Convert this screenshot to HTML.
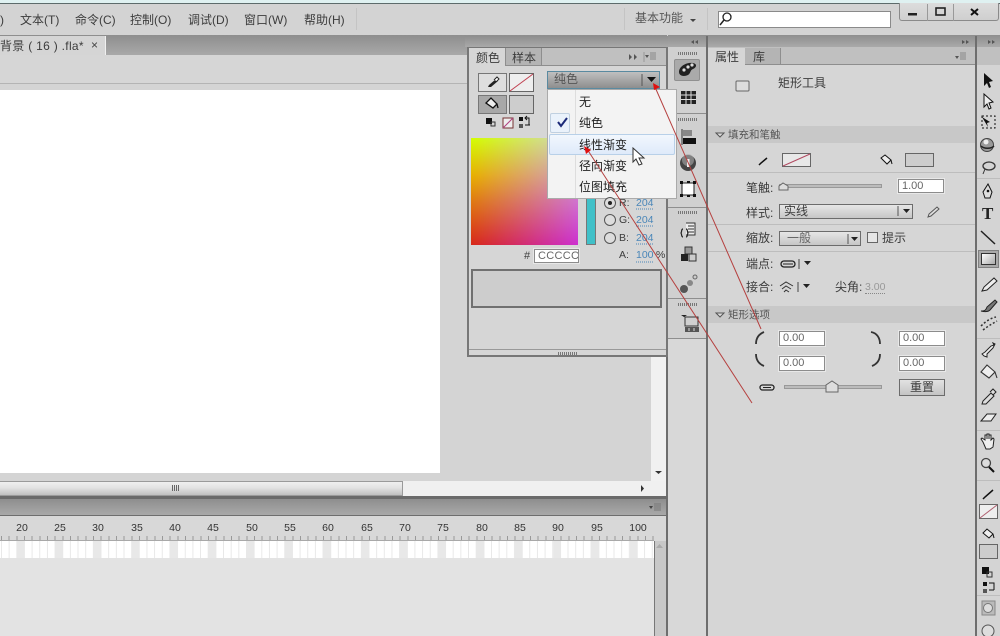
<!DOCTYPE html>
<html><head><meta charset="utf-8">
<style>
html,body{margin:0;padding:0}
body{width:1000px;height:636px;overflow:hidden;position:relative;background:#d4d4d4;font-family:"Liberation Sans","Noto Sans CJK SC",sans-serif;color:#3c3c3c;font-size:12px;filter:blur(.35px)}
.a{position:absolute}
.t{position:absolute;white-space:nowrap;line-height:14px}
.inp{position:absolute;background:#fff;border:1px solid #8c8c8c;box-shadow:0 0 0 1px #e8e8e8;box-sizing:border-box;font-size:11px;color:#666;line-height:13px;padding-left:3px}
.sw{position:absolute;box-sizing:border-box;border:1px solid #666;background:#cdcdcd}
.hr{position:absolute;height:1px;background:#bdbdbd}
.sel{position:absolute;box-sizing:border-box;border:1px solid #6c6c6c;background:linear-gradient(#e6e6e6,#c6c6c6);line-height:13px;padding-left:4px}
.grip{position:absolute;height:3px;width:20px;background:repeating-linear-gradient(90deg,#777 0 1px,transparent 1px 2px)}
.num{position:absolute;top:522px;font-size:10.5px;color:#333;width:20px;text-align:center;line-height:12px}
.bar{position:absolute;background:linear-gradient(#8e8e8e,#a9a9a9)}
</style></head><body>
<!-- top strip -->
<div class="a" style="left:0;top:0;width:1000px;height:3px;background:#dff1f1"></div>
<div class="a" style="left:0;top:3px;width:1000px;height:1px;background:#5d6b6b"></div>
<div class="a" style="left:0;top:4px;width:1000px;height:31px;background:#d3d3d3"></div>
<div class="t" style="left:0;top:13px">)</div>
<div class="t" style="left:20px;top:13px">文本(T)</div>
<div class="t" style="left:75px;top:13px">命令(C)</div>
<div class="t" style="left:130px;top:13px">控制(O)</div>
<div class="t" style="left:188px;top:13px">调试(D)</div>
<div class="t" style="left:244px;top:13px">窗口(W)</div>
<div class="t" style="left:304px;top:13px">帮助(H)</div>
<div class="a" style="left:356px;top:8px;width:1px;height:22px;background:#c4c4c4"></div>
<div class="a" style="left:624px;top:8px;width:1px;height:22px;background:#c4c4c4"></div>
<div class="a" style="left:707px;top:8px;width:1px;height:22px;background:#c4c4c4"></div>
<div class="t" style="left:635px;top:11px;color:#555">基本功能</div>
<div class="a" style="left:718px;top:11px;width:173px;height:17px;background:#fff;border:1px solid #8a8a8a;box-sizing:border-box"></div>
<div class="a" style="left:899px;top:3px;width:100px;height:18px;box-sizing:border-box;border:1px solid #8a8a8a;border-top:0;border-radius:0 0 3px 3px;background:linear-gradient(#dcdcdc,#cfcfcf)"></div>
<div class="a" style="left:927px;top:4px;width:1px;height:17px;background:#999"></div>
<div class="a" style="left:953px;top:4px;width:1px;height:17px;background:#999"></div>

<!-- doc tab bar -->
<div class="bar" style="left:0;top:35px;width:667px;height:20px"></div>
<div class="a" style="left:0;top:36px;width:105px;height:19px;background:#d5d5d5;border-right:1px solid #f0f0f0"></div>
<div class="t" style="left:0;top:39px;font-size:12px;letter-spacing:.3px">背景 ( 16 ) .fla*</div>
<div class="t" style="left:91px;top:38px;font-size:12px;color:#444">×</div>
<div class="a" style="left:0;top:55px;width:667px;height:28px;background:#d6d6d6"></div>
<div class="a" style="left:0;top:83px;width:667px;height:1px;background:#b4b4b4"></div>
<div class="a" style="left:0;top:84px;width:651px;height:397px;background:#d4d4d4"></div>
<div class="a" style="left:0;top:90px;width:440px;height:383px;background:#fff"></div>
<!-- scrollbars -->
<div class="a" style="left:651px;top:84px;width:15px;height:397px;background:#f1f1f1"></div>
<div class="a" style="left:0;top:481px;width:666px;height:15px;background:#f0f0f0"></div>
<div class="a" style="left:0;top:481px;width:403px;height:15px;box-sizing:border-box;border:1px solid #9a9a9a;border-left:0;background:linear-gradient(#efefef,#e2e2e2 45%,#c0c0c0)"></div>
<div class="a" style="left:172px;top:485px;width:7px;height:6px;background:repeating-linear-gradient(90deg,#666 0 1px,transparent 1px 2px)"></div>
<div class="a" style="left:666px;top:36px;width:2px;height:600px;background:#6e6e6e"></div>
<!-- timeline -->
<div class="a" style="left:0;top:496px;width:667px;height:3px;background:#6a6a6a"></div>
<div class="bar" style="left:0;top:499px;width:666px;height:16px"></div>
<div class="a" style="left:0;top:515px;width:666px;height:1px;background:#6e6e6e"></div>
<div class="a" style="left:0;top:516px;width:666px;height:24px;background:#d8d8d8"></div>
<div class="a" style="left:0;top:536px;width:654px;height:4px;background:repeating-linear-gradient(90deg,#999 0 1px,transparent 1px 7.667px);background-position:1px 0"></div>
<div class="a" style="left:0;top:540px;width:654px;height:1px;background:#a8a8a8"></div>
<div class="a" style="left:0;top:541px;width:654px;height:17px;background-color:#fff;background-image:linear-gradient(90deg,#e8e8e8 8px,transparent 8px),linear-gradient(90deg,#e8e8e8 1px,transparent 1px);background-size:38.33px 100%,7.667px 100%;background-position:16.5px 0,1px 0"></div>
<div class="a" style="left:0;top:558px;width:654px;height:78px;background:#e3e3e3"></div>
<div class="a" style="left:654px;top:541px;width:12px;height:95px;background:#c8c8c8;border-left:1px solid #777;box-sizing:border-box"></div>
<div class="a" style="left:654px;top:516px;width:12px;height:25px;background:#d8d8d8"></div>
<div class="num" style="left:12px">20</div><div class="num" style="left:50px">25</div><div class="num" style="left:88px">30</div><div class="num" style="left:127px">35</div><div class="num" style="left:165px">40</div><div class="num" style="left:203px">45</div><div class="num" style="left:242px">50</div><div class="num" style="left:280px">55</div><div class="num" style="left:318px">60</div><div class="num" style="left:357px">65</div><div class="num" style="left:395px">70</div><div class="num" style="left:433px">75</div><div class="num" style="left:472px">80</div><div class="num" style="left:510px">85</div><div class="num" style="left:548px">90</div><div class="num" style="left:587px">95</div><div class="num" style="left:628px">100</div>

<!-- right bar top -->
<div class="bar" style="left:668px;top:35px;width:332px;height:12px"></div>
<div class="a" style="left:465px;top:36px;width:203px;height:11px;background:linear-gradient(#8e8e8e,#a9a9a9)"></div>
<!-- dock strip -->
<div class="a" style="left:668px;top:47px;width:38px;height:589px;background:#d8d8d8"></div>
<div class="a" style="left:668px;top:47px;width:38px;height:291px;background:#d0d0d0"></div>
<div class="hr" style="left:668px;top:113px;width:38px;background:#8e8e8e"></div>
<div class="hr" style="left:668px;top:207px;width:38px;background:#8e8e8e"></div>
<div class="hr" style="left:668px;top:298px;width:38px;background:#8e8e8e"></div>
<div class="hr" style="left:668px;top:338px;width:38px;background:#8e8e8e"></div>
<div class="grip" style="left:678px;top:52px"></div><div class="grip" style="left:678px;top:118px"></div><div class="grip" style="left:678px;top:211px"></div><div class="grip" style="left:678px;top:303px"></div>
<div class="a" style="left:674px;top:59px;width:26px;height:22px;background:#aaa;border:1px solid #909090;box-sizing:border-box;border-radius:2px"></div>
<div class="a" style="left:706px;top:36px;width:2px;height:600px;background:#6e6e6e"></div>

<!-- property panel -->
<div class="a" style="left:708px;top:47px;width:267px;height:589px;background:#d6d6d6"></div>
<div class="a" style="left:708px;top:47px;width:267px;height:18px;background:#c0c0c0;border-bottom:1px solid #8e8e8e;box-sizing:border-box"></div>
<div class="a" style="left:708px;top:48px;width:37px;height:17px;background:#d6d6d6"></div>
<div class="a" style="left:745px;top:48px;width:35px;height:16px;background:#b4b4b4"></div>
<div class="a" style="left:780px;top:48px;width:1px;height:16px;background:#8e8e8e"></div>
<div class="t" style="left:715px;top:50px">属性</div>
<div class="t" style="left:753px;top:50px">库</div>
<div class="t" style="left:778px;top:76px">矩形工具</div>
<div class="a" style="left:708px;top:126px;width:267px;height:17px;background:#c8c8c8"></div>
<div class="t" style="left:728px;top:128px;font-size:10.5px;color:#555">填充和笔触</div>
<div class="sw" style="left:782px;top:153px;width:29px;height:14px;background:#e8e8e8"></div>
<div class="sw" style="left:905px;top:153px;width:29px;height:14px"></div>
<div class="hr" style="left:708px;top:172px;width:267px"></div>
<div class="t" style="left:746px;top:181px">笔触:</div>
<div class="a" style="left:779px;top:184px;width:103px;height:4px;background:#bcbcbc;border:1px solid #999;box-sizing:border-box"></div>
<div class="inp" style="left:898px;top:179px;width:46px;height:14px">1.00</div>
<div class="t" style="left:746px;top:206px">样式:</div>
<div class="sel" style="left:779px;top:204px;width:134px;height:15px">实线</div>
<div class="hr" style="left:708px;top:224px;width:267px"></div>
<div class="t" style="left:746px;top:231px">缩放:</div>
<div class="sel" style="left:779px;top:231px;width:82px;height:15px;color:#666;padding-left:7px">一般</div>
<div class="a" style="left:867px;top:232px;width:11px;height:11px;border:1px solid #666;box-sizing:border-box;background:#e6e6e6"></div>
<div class="t" style="left:882px;top:231px">提示</div>
<div class="hr" style="left:708px;top:251px;width:267px"></div>
<div class="t" style="left:746px;top:257px">端点:</div>
<div class="t" style="left:746px;top:280px">接合:</div>
<div class="t" style="left:835px;top:280px">尖角:</div>
<div class="t" style="left:865px;top:281px;font-size:10.5px;color:#999;border-bottom:1px dotted #888;line-height:12px">3.00</div>
<div class="a" style="left:708px;top:306px;width:267px;height:17px;background:#c8c8c8"></div>
<div class="t" style="left:728px;top:308px;font-size:10.5px;color:#555">矩形选项</div>
<div class="inp" style="left:779px;top:331px;width:46px;height:15px">0.00</div>
<div class="inp" style="left:899px;top:331px;width:46px;height:15px">0.00</div>
<div class="inp" style="left:779px;top:356px;width:46px;height:15px">0.00</div>
<div class="inp" style="left:899px;top:356px;width:46px;height:15px">0.00</div>
<div class="a" style="left:784px;top:385px;width:98px;height:4px;background:#bcbcbc;border:1px solid #999;box-sizing:border-box"></div>
<div class="a" style="left:899px;top:379px;width:46px;height:17px;box-sizing:border-box;border:1px solid #6c6c6c;background:linear-gradient(#e2e2e2,#c4c4c4);text-align:center;line-height:15px">重置</div>

<!-- tools -->
<div class="a" style="left:975px;top:36px;width:2px;height:600px;background:#6e6e6e"></div>
<div class="a" style="left:977px;top:47px;width:23px;height:589px;background:#d4d4d4"></div>
<div class="a" style="left:977px;top:47px;width:23px;height:18px;background:#c0c0c0"></div>
<div class="hr" style="left:977px;top:178px;width:23px"></div>
<div class="hr" style="left:977px;top:338px;width:23px"></div>
<div class="hr" style="left:977px;top:430px;width:23px"></div>
<div class="hr" style="left:977px;top:480px;width:23px"></div>
<div class="hr" style="left:977px;top:595px;width:23px"></div>
<div class="a" style="left:978px;top:250px;width:21px;height:18px;background:#aaa;border:1px solid #808080;box-sizing:border-box"></div>
<div class="a" style="left:981px;top:253px;width:15px;height:12px;border:1px solid #333;box-sizing:border-box;background:linear-gradient(135deg,#fff,#aaa)"></div>
<div class="t" style="left:982px;top:205px;font:bold 17px/18px 'Liberation Serif',serif;color:#222">T</div>
<div class="sw" style="left:979px;top:504px;width:19px;height:15px;background:#eee"></div>
<div class="sw" style="left:979px;top:544px;width:19px;height:15px"></div>

<!-- color panel -->
<div class="a" style="left:467px;top:47px;width:201px;height:310px;box-sizing:border-box;border:2px solid #777;border-top:1px solid #777;background:#d6d6d6"></div>
<div class="a" style="left:469px;top:48px;width:197px;height:18px;background:#c0c0c0;border-bottom:1px solid #8e8e8e;box-sizing:border-box"></div>
<div class="a" style="left:469px;top:48px;width:36px;height:18px;background:#d6d6d6"></div>
<div class="a" style="left:506px;top:48px;width:35px;height:17px;background:#b4b4b4"></div>
<div class="a" style="left:541px;top:48px;width:1px;height:17px;background:#8e8e8e"></div>
<div class="a" style="left:505px;top:48px;width:1px;height:17px;background:#8e8e8e"></div>
<div class="t" style="left:476px;top:51px">颜色</div>
<div class="t" style="left:512px;top:51px">样本</div>
<div class="a" style="left:478px;top:73px;width:29px;height:19px;box-sizing:border-box;border:1px solid #777;background:#dedede"></div>
<div class="a" style="left:478px;top:95px;width:29px;height:19px;box-sizing:border-box;border:1px solid #777;background:#a8a8a8"></div>
<div class="sw" style="left:509px;top:73px;width:25px;height:19px;background:#eee"></div>
<div class="sw" style="left:509px;top:95px;width:25px;height:19px"></div>
<div class="a" style="left:547px;top:71px;width:113px;height:18px;box-sizing:border-box;border:1px solid #5a8aa0;background:linear-gradient(#c0c0c0,#8e8e8e);color:#555;line-height:15px;padding-left:6px">纯色</div>
<div class="a" style="left:471px;top:138px;width:107px;height:107px;background:linear-gradient(#d4ff00,#e8b000 35%,#e07810 60%,#d82818)"></div>
<div class="a" style="left:471px;top:138px;width:107px;height:107px;background:linear-gradient(#d0d0c8,#d080d0 50%,#cc30d0);-webkit-mask-image:linear-gradient(90deg,transparent,#000);mask-image:linear-gradient(90deg,transparent,#000)"></div>
<div class="a" style="left:586px;top:190px;width:10px;height:55px;background:#40c0c8;border:1px solid #777;box-sizing:border-box"></div>
<div class="t" style="left:619px;top:196px;font-size:10.5px">R:</div><div class="t" style="left:619px;top:213px;font-size:10.5px">G:</div><div class="t" style="left:619px;top:231px;font-size:10.5px">B:</div><div class="t" style="left:619px;top:248px;font-size:10.5px">A:</div>
<div class="t" style="left:636px;top:196px;font-size:10.5px;color:#4a86b8">204</div><div class="t" style="left:636px;top:213px;font-size:10.5px;color:#4a86b8">204</div><div class="t" style="left:636px;top:231px;font-size:10.5px;color:#4a86b8">204</div><div class="t" style="left:636px;top:248px;font-size:10.5px;color:#4a86b8">100</div>
<div class="t" style="left:656px;top:248px;font-size:10.5px">%</div>
<div class="t" style="left:524px;top:249px;font-size:11px">#</div>
<div class="inp" style="left:534px;top:249px;width:45px;height:14px;overflow:hidden;letter-spacing:.3px">CCCCCC</div>
<div class="a" style="left:471px;top:269px;width:191px;height:39px;box-sizing:border-box;border:2px solid #707070;background:#cdcdcd"></div>
<div class="hr" style="left:469px;top:349px;width:197px;background:#999"></div>
<div class="grip" style="left:558px;top:352px"></div>

<!-- dropdown -->
<div class="a" style="left:547px;top:89px;width:130px;height:110px;background:#f3f3f3;border:1px solid #aaa;box-sizing:border-box"></div>
<div class="a" style="left:575px;top:90px;width:1px;height:108px;background:#ddd"></div>
<div class="a" style="left:550px;top:113px;width:20px;height:20px;box-sizing:border-box;border:1px solid #c0d0e0;border-radius:2px;background:#eaf2fb"></div>
<div class="a" style="left:549px;top:134px;width:126px;height:21px;box-sizing:border-box;border:1px solid #b8d0e8;border-radius:2px;background:linear-gradient(#f2f7fd,#dfeafa)"></div>
<div class="t" style="left:579px;top:95px;color:#222">无</div>
<div class="t" style="left:579px;top:116px;color:#222">纯色</div>
<div class="t" style="left:579px;top:138px;color:#222">线性渐变</div>
<div class="t" style="left:579px;top:159px;color:#222">径向渐变</div>
<div class="t" style="left:579px;top:180px;color:#222">位图填充</div>

<svg class="a" style="left:0;top:0" width="1000" height="636" viewBox="0 0 1000 636" fill="none">
<!-- top icons -->
<path d="M690 19l3 3 3-3z" fill="#444"/>
<circle cx="727" cy="17" r="4" stroke="#222" stroke-width="1.3"/><path d="M724 20l-4 5" stroke="#222" stroke-width="1.5"/>
<rect x="908" y="13" width="9" height="2.5" fill="#222"/>
<rect x="936" y="8" width="9" height="7" stroke="#222" stroke-width="1.6"/>
<path d="M971 9l7 6M978 9l-7 6" stroke="#111" stroke-width="2"/>
<!-- collapse arrows -->
<path d="M694 40v4l-3-2zM698 40v4l-3-2z" fill="#555"/>
<path d="M962 40v4l3-2zM966 40v4l3-2zM988 40v4l3-2zM992 40v4l3-2z" fill="#555"/>
<!-- panel menus -->
<path d="M955 56h4l-2 3z" fill="#555"/><path d="M960 53h6M960 55h6M960 57h6M960 59h6" stroke="#888"/>
<path d="M645 55h4l-2 3z" fill="#555"/><path d="M650 53h6M650 55h6M650 57h6M650 59h6" stroke="#888"/>
<path d="M629 54v6l3-3zM634 54v6l3-3z" fill="#555"/><path d="M644 52v10" stroke="#999"/>
<path d="M649 506h4l-2 3z" fill="#444"/><path d="M654 504h7M654 506h7M654 508h7M654 510h7" stroke="#777"/>
<!-- scroll arrows -->
<path d="M655 471h7l-3.500 3z" fill="#333"/><path d="M641 485v7l3-3.500z" fill="#333"/>
<path d="M656 548h7l-3.500-4z" fill="#aaa"/>
<!-- colour panel icons -->
<path d="M488 87l1-2 7-6 2 2-7 6z" fill="#222"/><path d="M494 80l3-3 2 2-2 2" fill="#fff" stroke="#222"/>
<path d="M510 91l23-17" stroke="#c04050"/>
<path d="M486 103l5-5 6 6-4 4zM497 104l1 4" stroke="#111" stroke-width="1.300" fill="#eee"/>
<rect x="486" y="118" width="6" height="6" fill="#111"/><rect x="491" y="122" width="4" height="4" stroke="#333"/>
<rect x="503" y="118" width="10" height="10" stroke="#733" fill="#eee"/><path d="M503 128l10-10" stroke="#b04080"/>
<rect x="519" y="117" width="4" height="4" fill="#111"/><rect x="519" y="124" width="4" height="4" fill="#555"/><path d="M525 118h4v7M525 125h5M527 116l-2 2 2 2" stroke="#111"/>
<path d="M558 122l3 4 6-8" stroke="#1c2a78" stroke-width="2"/>
<path d="M642 74v12" stroke="#555"/><path d="M647 77h9l-4.500 5z" fill="#111"/>
<circle cx="610" cy="203" r="5.500" stroke="#555" fill="#ddd"/><circle cx="610" cy="203" r="2" fill="#222"/>
<circle cx="610" cy="220" r="5.500" stroke="#555" fill="#ddd"/>
<circle cx="610" cy="238" r="5.500" stroke="#555" fill="#ddd"/>
<path d="M636 209h18M636 226h18M636 244h18M636 262h18" stroke="#4a86b8" stroke-dasharray="1 1"/>
<!-- dock icons -->
<path d="M679 72c0-6 8-10 14-9 5 1 3 5 0 6-3 1-2 4-5 6-4 2-9 1-9-3z" fill="#222"/><circle cx="684" cy="70" r="1.600" fill="#ddd"/><circle cx="688" cy="67" r="1.600" fill="#ddd"/><circle cx="692" cy="65" r="1.600" fill="#ddd"/>
<rect x="681" y="91" width="15" height="13" fill="#222"/><path d="M681 95h15M681 99.500h15M686 91v13M691 91v13" stroke="#ddd"/>
<path d="M682 129v16" stroke="#333"/><rect x="683" y="130" width="9" height="6" fill="#888"/><rect x="683" y="138" width="13" height="6" fill="#111"/>
<circle cx="688" cy="163" r="8" fill="#444"/><circle cx="688" cy="160" r="6" fill="#aaa" opacity=".6"/><rect x="687" y="159" width="2.500" height="8" fill="#eee"/>
<rect x="682" y="183" width="12" height="12" fill="#fff" stroke="#222"/><path d="M680 181h3v3h-3zM693 181h3v3h-3zM680 194h3v3h-3zM693 194h3v3h-3zM687 181h3v2h-3zM687 195h3v2h-3z" fill="#111"/>
<path d="M686 223h9v12h-9" stroke="#333" fill="#eee"/><path d="M688 226h6M688 229h6M688 232h6" stroke="#333"/><path d="M683 229c-2 0-1 3-2 4 1 1 0 4 2 4M686 229c2 0 1 3 2 4-1 1 0 4-2 4" stroke="#222" stroke-width="1.200"/>
<rect x="685" y="247" width="7" height="7" fill="#999" stroke="#333"/><rect x="681" y="254" width="7" height="7" fill="#222"/><rect x="689" y="254" width="7" height="7" fill="#ccc" stroke="#333"/>
<circle cx="684" cy="289" r="4" fill="#555"/><circle cx="690" cy="283" r="3" fill="#888"/><circle cx="695" cy="277" r="2" stroke="#666" fill="#ccc"/>
<path d="M681 315h6l-3 2z" fill="#222"/><rect x="685" y="317" width="13" height="9" stroke="#333"/><rect x="685" y="327" width="14" height="5" fill="#555"/><path d="M689 328v3M694 328v3" stroke="#ddd"/>
<!-- property icons -->
<path d="M716 133l4 4 4-4z" fill="#ddd" stroke="#555"/><path d="M716 313l4 4 4-4z" fill="#ddd" stroke="#555"/>
<rect x="736" y="81" width="13" height="10" rx="1" fill="#ddd" stroke="#666"/>
<path d="M759 165l2-2 6-5" stroke="#111" stroke-width="1.500"/>
<path d="M783 166l27-12" stroke="#b04860"/>
<path d="M881 158l4-3 6 5-4 4zM891 160l1 4" stroke="#111" fill="#eee"/>
<path d="M779 190v-4l4-3 5 3v4z" fill="#ddd" stroke="#666"/>
<path d="M898 206v10M848 234v10" stroke="#555"/><path d="M903 209h7l-3.500 4zM851 237h7l-3.500 4z" fill="#222"/>
<path d="M928 217l1-3 8-7 2 2-8 7z" fill="#ddd" stroke="#555"/>
<rect x="781" y="261" width="14" height="6" rx="3" stroke="#222" stroke-width="1.300"/><path d="M783 264h10" stroke="#222"/>
<path d="M799 259v10M798 282v10" stroke="#444"/><path d="M804 261h7l-3.500 4zM803 284h7l-3.500 4z" fill="#222"/>
<path d="M780 286l6-4 7 4M782 289l4-3 5 3M784 292l2-2 3 2" stroke="#333"/>
<path d="M756 344c0-6 3-10 8-12M756 354c0 6 3 10 8 12M871 332c6 1 9 6 9 12M880 354c0 6-3 10-8 12" stroke="#333" stroke-width="1.800"/>
<rect x="760" y="385" width="14" height="5" rx="2.500" stroke="#222" stroke-width="1.300"/><path d="M763 387.500h8" stroke="#222"/>
<path d="M826 392v-7l6-4 6 4v7z" fill="#ddd" stroke="#666"/>
<!-- tool icons -->
<path d="M984 73l0 13 3-3 2 5 2-1-2-5 4-1z" fill="#111"/>
<path d="M984 94l0 13 3-3 2 5 2-1-2-5 4-1z" fill="#eee" stroke="#111"/>
<rect x="982" y="116" width="13" height="12" stroke="#111" stroke-dasharray="2 2"/><path d="M982 117l8 5-3 1 1 4z" fill="#111"/>
<circle cx="987" cy="145" r="6.500" fill="#999" stroke="#444"/><path d="M981 146c3 3 10 3 13 0" stroke="#222" stroke-width="1.500"/><circle cx="986" cy="142" r="2.500" fill="#eee"/>
<ellipse cx="989" cy="166" rx="6" ry="4" stroke="#333" stroke-width="1.300"/><path d="M985 169l-2 5" stroke="#333"/>
<path d="M988 184l4 8-2 6h-5l-2-6z" fill="#ddd" stroke="#111"/><circle cx="988" cy="191" r="1.300" fill="#111"/>
<path d="M981 231l14 13" stroke="#222" stroke-width="1.500"/>
<path d="M982 291l2-4 10-9 3 3-10 9z" fill="#eee" stroke="#222"/>
<path d="M981 311c4 0 5-1 6-4l8-7 2 2-7 8c-2 2-5 2-9 1z" fill="#777" stroke="#222"/>
<path d="M981 326c5-5 10-8 15-9M983 330c5-4 9-6 14-9" stroke="#333" stroke-dasharray="2 2" stroke-width="1.500"/>
<path d="M982 354l3-2 6-6 3-1-1-2 2 1-2 4-6 6 0 3-3-1z" fill="#eee" stroke="#222"/>
<path d="M981 372l6-7 8 7-6 6zM995 372l2 6" fill="#eee" stroke="#333" stroke-width="1.100"/>
<path d="M982 404l1-3 8-8 3 3-8 8zM990 392l3-3 3 3-3 3" fill="#ddd" stroke="#222"/>
<path d="M981 421l6-7h9l-5 7z" fill="#eee" stroke="#222"/>
<path d="M983 442l-2-3 1-1 3 2v-5h2v4-5h2v5-4h2v5l2-2 1 1-1 8-3 2h-4z" fill="#eee" stroke="#222"/>
<circle cx="986" cy="463" r="4.500" fill="#ddd" stroke="#444" stroke-width="1.300"/><path d="M989 467l5 5" stroke="#111" stroke-width="2"/>
<path d="M983 499l2-2 8-7" stroke="#111" stroke-width="1.500"/>
<path d="M980 518l17-13" stroke="#b06070"/>
<path d="M983 533l4-4 6 5-4 4zM993 534l1 4" stroke="#111" fill="#eee"/>
<rect x="982" y="567" width="7" height="7" fill="#111"/><rect x="987" y="572" width="5" height="5" stroke="#333"/>
<rect x="983" y="582" width="4" height="4" fill="#111"/><rect x="983" y="589" width="4" height="4" fill="#555"/><path d="M989 583h5v7M989 590h5" stroke="#111"/>
<rect x="982" y="601" width="13" height="14" fill="#bbb" stroke="#888"/><circle cx="988" cy="608" r="4.500" fill="#ddd" stroke="#777"/>
<circle cx="988" cy="631" r="6" stroke="#555" fill="#ddd"/>
<!-- cursor -->
<path d="M633 148v14l3-3 3 6 3-1-3-6h5z" fill="#fff" stroke="#333"/>
<!-- red annotation lines -->
<path d="M655 87L761 329" stroke="#b5403f" stroke-width="1"/>
<path d="M587 149L752 403" stroke="#b5403f" stroke-width="1"/>
<path d="M653 83l7 4-6 3z" fill="#e01010"/>
<path d="M584 146l7 4-5 4z" fill="#e01010"/>
</svg>
</body></html>
